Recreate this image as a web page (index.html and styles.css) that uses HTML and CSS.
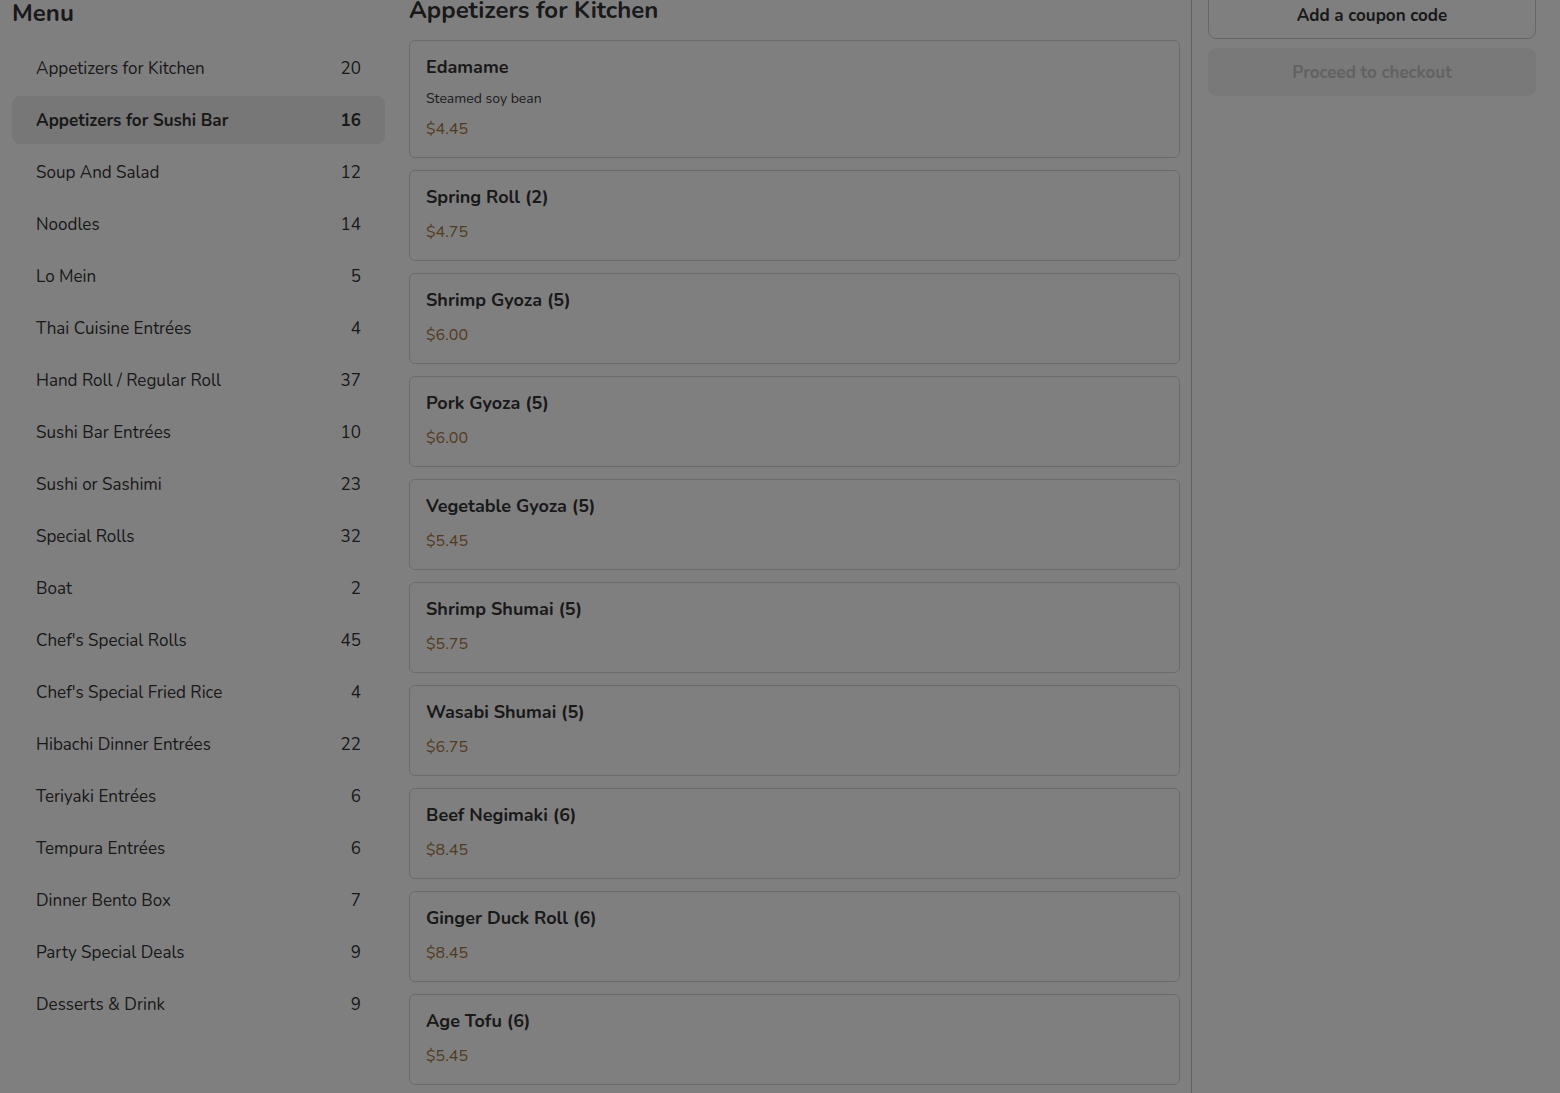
FILE: index.html
```html
<!DOCTYPE html>
<html lang="en">
<head>
<meta charset="utf-8">
<title>Menu</title>
<link rel="stylesheet" href="styles.css">
</head>
<body>
<div class="page">
  <aside class="sidebar">
    <h2 class="side-title">Menu</h2>
    <ul class="cat-list">
      <li class="cat"><span>Appetizers for Kitchen</span><span>20</span></li>
      <li class="cat active"><span>Appetizers for Sushi Bar</span><span>16</span></li>
      <li class="cat"><span>Soup And Salad</span><span>12</span></li>
      <li class="cat"><span>Noodles</span><span>14</span></li>
      <li class="cat"><span>Lo Mein</span><span>5</span></li>
      <li class="cat"><span>Thai Cuisine Entrées</span><span>4</span></li>
      <li class="cat"><span>Hand Roll / Regular Roll</span><span>37</span></li>
      <li class="cat"><span>Sushi Bar Entrées</span><span>10</span></li>
      <li class="cat"><span>Sushi or Sashimi</span><span>23</span></li>
      <li class="cat"><span>Special Rolls</span><span>32</span></li>
      <li class="cat"><span>Boat</span><span>2</span></li>
      <li class="cat"><span>Chef's Special Rolls</span><span>45</span></li>
      <li class="cat"><span>Chef's Special Fried Rice</span><span>4</span></li>
      <li class="cat"><span>Hibachi Dinner Entrées</span><span>22</span></li>
      <li class="cat"><span>Teriyaki Entrées</span><span>6</span></li>
      <li class="cat"><span>Tempura Entrées</span><span>6</span></li>
      <li class="cat"><span>Dinner Bento Box</span><span>7</span></li>
      <li class="cat"><span>Party Special Deals</span><span>9</span></li>
      <li class="cat"><span>Desserts &amp; Drink</span><span>9</span></li>
    </ul>
  </aside>

  <main class="main">
    <h2 class="main-title">Appetizers for Kitchen</h2>
    <div class="cards">
      <div class="card">
        <div class="item-name">Edamame</div>
        <div class="item-desc">Steamed soy bean</div>
        <div class="item-price">$4.45</div>
      </div>
      <div class="card"><div class="item-name">Spring Roll (2)</div><div class="item-price">$4.75</div></div>
      <div class="card"><div class="item-name">Shrimp Gyoza (5)</div><div class="item-price">$6.00</div></div>
      <div class="card"><div class="item-name">Pork Gyoza (5)</div><div class="item-price">$6.00</div></div>
      <div class="card"><div class="item-name">Vegetable Gyoza (5)</div><div class="item-price">$5.45</div></div>
      <div class="card"><div class="item-name">Shrimp Shumai (5)</div><div class="item-price">$5.75</div></div>
      <div class="card"><div class="item-name">Wasabi Shumai (5)</div><div class="item-price">$6.75</div></div>
      <div class="card"><div class="item-name">Beef Negimaki (6)</div><div class="item-price">$8.45</div></div>
      <div class="card"><div class="item-name">Ginger Duck Roll (6)</div><div class="item-price">$8.45</div></div>
      <div class="card"><div class="item-name">Age Tofu (6)</div><div class="item-price">$5.45</div></div>
    </div>
  </main>

  <aside class="cart">
    <div class="cart-inner">
      <button class="btn-coupon" type="button">Add a coupon code</button>
      <button class="btn-checkout" type="button" disabled>Proceed to checkout</button>
    </div>
  </aside>
</div>
<div class="overlay"></div>
</body>
</html>
```

FILE: styles.css
```css
* { box-sizing: border-box; }

html, body {
  margin: 0;
  padding: 0;
  height: 100%;
  overflow: hidden;
  background: #ffffff;
}

body {
  font-family: Nunito, Lato, "Noto Sans", sans-serif;
  color: #333333;
}

.page {
  display: flex;
  align-items: stretch;
  min-height: 100vh;
  padding-left: 12px;
}

.sidebar {
  width: 373px;
  flex: 0 0 373px;
}

.side-title {
  margin: -1px 0 0 0;
  font-size: 24px;
  line-height: 28px;
  font-weight: 700;
  color: #333;
}

.cat-list {
  list-style: none;
  margin: 17px 0 0 0;
  padding: 0;
  display: flex;
  flex-direction: column;
  gap: 4px;
}

.cat {
  height: 48px;
  display: flex;
  align-items: center;
  justify-content: space-between;
  padding: 0 24px;
  font-size: 17px;
  border-radius: 8px;
  color: #333;
}

.cat.active {
  background: #eeeeee;
  font-weight: 700;
}

.main {
  width: 771px;
  flex: 0 0 771px;
  margin-left: 24px;
}

.main-title {
  margin: -4px 0 0 0;
  font-size: 24px;
  line-height: 28px;
  font-weight: 700;
  color: #333;
}

.cards {
  margin-top: 16px;
  display: flex;
  flex-direction: column;
  gap: 12px;
}

.card {
  border: 1px solid #d6d6d6;
  border-radius: 6px;
  padding: 14px 16px 16px;
  background: #fff;
}

.item-name {
  font-size: 18px;
  line-height: 24px;
  font-weight: 700;
  color: #333;
  margin-bottom: 11px;
}

.item-desc {
  font-size: 14px;
  line-height: 20px;
  color: #3a3a3a;
  margin-top: -1px;
  margin-bottom: 8px;
}

.item-price {
  font-size: 16px;
  line-height: 24px;
  color: #a4783e;
}

.cart {
  margin-left: 11px;
  flex: 1 1 auto;
  border-left: 1px solid #c4c4c4;
  padding: 0 24px 0 16px;
}

.cart-inner {
  margin-top: -9px;
  display: flex;
  flex-direction: column;
  gap: 9px;
}

.btn-coupon,
.btn-checkout {
  width: 100%;
  height: 48px;
  border-radius: 8px;
  font-family: inherit;
  font-size: 17px;
  font-weight: 700;
}

.btn-coupon {
  background: #fff;
  border: 1px solid #cfcfcf;
  color: #333;
}

.btn-checkout {
  background: #f3f3f3;
  border: none;
  color: #c4c4c4;
}

.overlay {
  position: fixed;
  inset: 0;
  background: rgba(0, 0, 0, 0.5);
}
```
